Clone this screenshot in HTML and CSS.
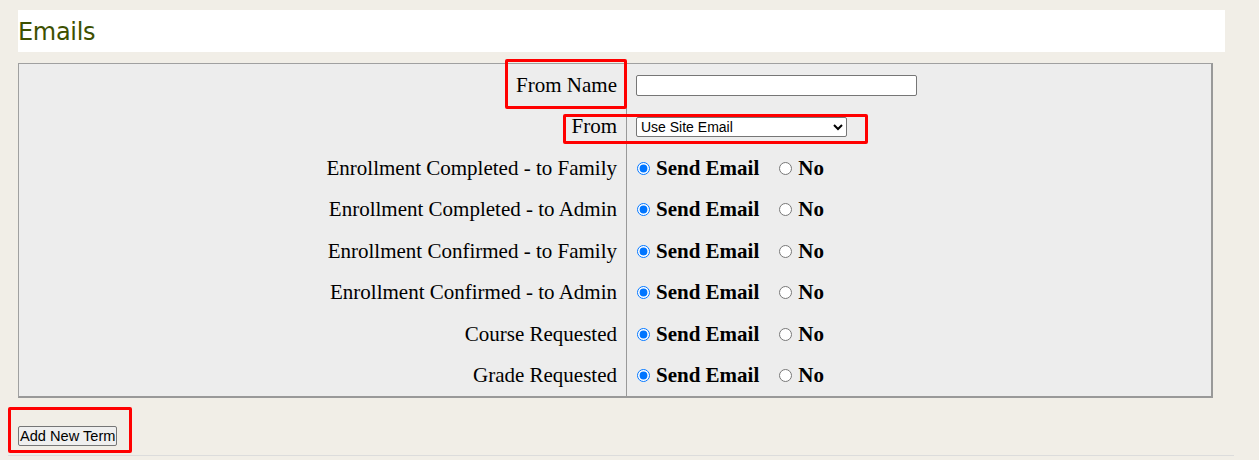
FILE: index.html
```html
<!DOCTYPE html>
<html>
<head>
<meta charset="utf-8">
<link rel="stylesheet" href="styles.css">
</head>
<body>
<div class="page">
  <div class="content">
    <h2 class="title">Emails</h2>
    <div class="settings">
      <div class="label">From Name</div>
      <div class="field"><input type="text" class="text-input"></div>
      <div class="label">From</div>
      <div class="field">
        <select class="select"><option>Use Site Email</option></select>
      </div>
      <div class="label">Enrollment Completed - to Family</div>
      <div class="field"><label class="opt"><input type="radio" name="r1" checked><b>Send Email</b></label><label class="opt"><input type="radio" name="r1"><b>No</b></label></div>
      <div class="label">Enrollment Completed - to Admin</div>
      <div class="field"><label class="opt"><input type="radio" name="r2" checked><b>Send Email</b></label><label class="opt"><input type="radio" name="r2"><b>No</b></label></div>
      <div class="label">Enrollment Confirmed - to Family</div>
      <div class="field"><label class="opt"><input type="radio" name="r3" checked><b>Send Email</b></label><label class="opt"><input type="radio" name="r3"><b>No</b></label></div>
      <div class="label">Enrollment Confirmed - to Admin</div>
      <div class="field"><label class="opt"><input type="radio" name="r4" checked><b>Send Email</b></label><label class="opt"><input type="radio" name="r4"><b>No</b></label></div>
      <div class="label">Course Requested</div>
      <div class="field"><label class="opt"><input type="radio" name="r5" checked><b>Send Email</b></label><label class="opt"><input type="radio" name="r5"><b>No</b></label></div>
      <div class="label">Grade Requested</div>
      <div class="field"><label class="opt"><input type="radio" name="r6" checked><b>Send Email</b></label><label class="opt"><input type="radio" name="r6"><b>No</b></label></div>
    </div>
    <div class="actions">
      <button class="btn">Add New Term</button>
    </div>
  </div>
  <div class="rule"></div>
  <div class="mark mark-name"></div>
  <div class="mark mark-from"></div>
  <div class="mark mark-btn"></div>
</div>
</body>
</html>
```
FILE: styles.css
```css
html, body {
  margin: 0;
  padding: 0;
  background: #f1eee7;
}
body {
  padding: 10px 8px 0 8px;
}
.page {
  position: relative;
  width: 1227px;
}
.content {
  padding: 0 10px;
}
.title {
  margin: 0;
  height: 42px;
  background: #ffffff;
  font-family: "URW Gothic", "DejaVu Sans", sans-serif;
  font-weight: normal;
  font-size: 24px;
  color: #3d5000;
  line-height: 44px;
  padding-left: 0;
  letter-spacing: -0.3px;
}
.settings {
  margin-top: 11px;
  width: 1192px;
  background: #ededed;
  border-left: 1px solid #a0a0a0;
  border-top: 1px solid #a0a0a0;
  border-right: 2px solid #999;
  border-bottom: 2px solid #999;
  display: grid;
  grid-template-columns: 607px 1fr;
  grid-auto-rows: 41.5px;
  font-family: "Liberation Serif", "DejaVu Serif", serif;
  font-size: 21px;
  color: #000;
}
.label {
  display: flex;
  align-items: center;
  justify-content: flex-end;
  padding-right: 9px;
  padding-top: 1px;
}
.field {
  display: flex;
  align-items: center;
  border-left: 1px solid #999;
  padding-left: 9px;
}
.text-input {
  width: 281px;
  height: 21px;
  box-sizing: border-box;
  margin: 2px 0 0 0;
  border: 1px solid #767676;
  border-radius: 2px;
  background: #fff;
}
.select {
  width: 211px;
  height: 20px;
  box-sizing: border-box;
  margin: 1px 0 0 0;
  font-family: "Liberation Sans", Arial, sans-serif;
  font-size: 14px;
  border: 1px solid #767676;
  border-radius: 2px;
  background: #fff;
  color: #000;
}
.opt {
  display: flex;
  align-items: center;
  margin-right: 19px;
  padding-top: 1px;
}
.opt input {
  margin: 0 6px 0 1px;
  width: 13px;
  height: 13px;
}
.opt b {
  font-weight: bold;
}
.actions {
  padding-top: 28px;
  height: 29px;
}
.btn {
  margin: 0;
  font-family: "Liberation Sans", Arial, sans-serif;
  font-size: 14.6px;
  height: 20px;
  padding: 0 1px;
  white-space: nowrap;
  line-height: 16px;
  border: 1px solid #767676;
  border-radius: 2px;
  background: #efefef;
  color: #000;
}
.rule {
  height: 1px;
  background: #dcdcdc;
  width: 1226px;
}
.mark {
  position: absolute;
  border: 3px solid #f00;
  border-radius: 2px;
  box-sizing: border-box;
}
.mark-name {
  left: 497px;
  top: 49px;
  width: 122px;
  height: 50px;
}
.mark-from {
  left: 555px;
  top: 104px;
  width: 305px;
  height: 30px;
}
.mark-btn {
  left: 0px;
  top: 397px;
  width: 124px;
  height: 46px;
}
```
